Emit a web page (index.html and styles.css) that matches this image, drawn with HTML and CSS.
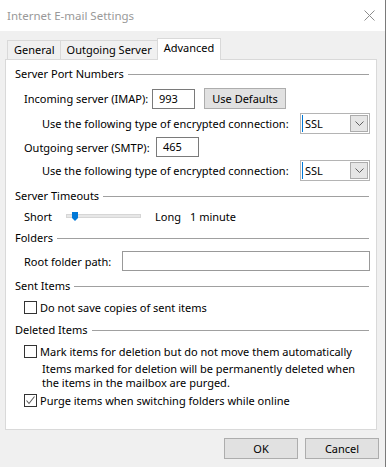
FILE: index.html
```html
<!DOCTYPE html>
<html>
    <head>
        <meta charset="utf-8">
        <title>Internet E-mail Settings</title>
        <link rel="stylesheet" href="styles.css">
    </head>
    <body>
        <div class="window">
            <div class="titlebar">
                <span class="title">Internet E-mail Settings</span>
                <svg class="close" width="11" height="11" viewBox="0 0 11 11"><path d="M0.5 0.5L10.5 10.5M10.5 0.5L0.5 10.5" stroke="#8c8c8c" stroke-width="1" fill="none"/></svg>
            </div>

            <div class="tabs">
                <span class="tab">General</span>
                <span class="tab">Outgoing Server</span>
                <span class="tab active">Advanced</span>
            </div>

            <div class="panel">
                <div class="group first">Server Port Numbers</div>
                <div class="row port">
                    <span class="label in-label">Incoming server (IMAP):</span>
                    <span class="field port-field">993</span>
                    <span class="btn defaults">Use Defaults</span>
                </div>
                <div class="row sub">
                    <span>Use the following type of encrypted connection:</span>
                    <span class="select"><span class="value">SSL</span><span class="arrow"><svg width="9" height="5" viewBox="0 0 9 5"><path d="M0.5 0.5L4.5 4.5L8.5 0.5" stroke="#606060" fill="none"/></svg></span></span>
                </div>
                <div class="row out">
                    <span class="label out-label">Outgoing server (SMTP):</span>
                    <span class="field port-field">465</span>
                </div>
                <div class="row sub last">
                    <span>Use the following type of encrypted connection:</span>
                    <span class="select"><span class="value">SSL</span><span class="arrow"><svg width="9" height="5" viewBox="0 0 9 5"><path d="M0.5 0.5L4.5 4.5L8.5 0.5" stroke="#606060" fill="none"/></svg></span></span>
                </div>

                <div class="group wide">Server Timeouts</div>
                <div class="row timeout">
                    <span class="short-label">Short</span>
                    <span class="slider">
                        <svg class="thumb" width="6" height="9" viewBox="0 0 6 9"><path d="M0 0H6V6L3 9L0 6Z" fill="#0078d7"/></svg>
                    </span>
                    <span class="long-label">Long</span>
                    <span>1 minute</span>
                </div>

                <div class="group">Folders</div>
                <div class="row root">
                    <span class="label root-label">Root folder path:</span>
                    <span class="field root-field"></span>
                </div>

                <div class="group">Sent Items</div>
                <div class="row check-row">
                    <span class="check"></span>
                    <span>Do not save copies of sent items</span>
                </div>

                <div class="group wide">Deleted Items</div>
                <div class="row check-row">
                    <span class="check"></span>
                    <span>Mark items for deletion but do not move them automatically</span>
                </div>
                <p class="note">Items marked for deletion will be permanently deleted when<br>the items in the mailbox are purged.</p>
                <div class="row check-row tight">
                    <span class="check"><svg width="11" height="11" viewBox="0 0 11 11"><path d="M1.5 5.5L4 8.5L9.5 1.5" stroke="#5c5c5c" stroke-width="1.1" fill="none"/></svg></span>
                    <span>Purge items when switching folders while online</span>
                </div>
            </div>

            <div class="actions">
                <span class="btn">OK</span>
                <span class="btn">Cancel</span>
            </div>
        </div>
    </body>
</html>
```

FILE: styles.css
```css
* {
    box-sizing: border-box;
}
body {
    margin: 0;
    font-family: "Noto Sans", "Open Sans", sans-serif;
    font-size: 11px;
    color: #000;
    background: #f0f0f0;
}
.window {
    width: 386px;
    height: 467px;
    border-right: 1px solid #7a7a7a;
    background: #f0f0f0;
}
.titlebar {
    height: 31px;
    background: #fff;
    display: flex;
    align-items: center;
    justify-content: space-between;
    padding: 0 10px 0 7px;
}
.title {
    color: #999;
    font-size: 11.5px;
}

/* tabs */
.tabs {
    display: flex;
    align-items: flex-end;
    margin: 7px 0 -1px 7px;
    position: relative;
    z-index: 1;
}
.tab {
    height: 20px;
    line-height: 18px;
    padding: 0 5px 0 6px;
    margin-right: -1px;
    border: 1px solid #d9d9d9;
    background: #f0f0f0;
}
.tab.active {
    height: 22px;
    padding: 0 6px;
    line-height: 18px;
    border-bottom: 0;
    background: #fff;
}
.panel {
    margin-left: 5px;
    width: 372px;
    height: 371px;
    border: 1px solid #d9d9d9;
    background: #fff;
    padding: 7px 6px 0 9px;
}

/* group headers */
.group {
    display: flex;
    align-items: center;
    height: 14px;
    line-height: 14px;
    margin-top: 8px;
}
.group.first {
    margin-top: 0;
}
.group.wide {
    margin-top: 9px;
}
.group::after {
    content: "";
    flex: 1;
    border-top: 1px solid #a0a0a0;
    margin: 1px 1px 0 4px;
}

/* rows */
.row {
    display: flex;
    align-items: center;
    padding-left: 9px;
    height: 20px;
    margin-top: 4px;
}
.row.port {
    height: 21px;
    margin-top: 7px;
}
.row.sub {
    padding-left: 27px;
}
.row.last {
    margin-top: 3px;
}
.row.timeout {
    height: 14px;
    margin-top: 6px;
}
.row.root {
    margin-top: 6px;
}
.row.check-row {
    height: 14px;
    margin-top: 7px;
}
.row.check-row.tight {
    margin-top: 3px;
}
.in-label {
    width: 128px;
}
.out-label {
    width: 132px;
}
.root-label {
    width: 98px;
}
.field {
    height: 20px;
    line-height: 18px;
    border: 1px solid #7a7a7a;
    background: #fff;
    padding: 0 6px;
}
.port-field {
    width: 43px;
}
.root-field {
    flex: 1;
    border-color: #999;
}
.btn {
    display: flex;
    align-items: center;
    justify-content: center;
    width: 74px;
    height: 21px;
    border: 1px solid #adadad;
    background: #e1e1e1;
}
.btn.defaults {
    width: 82px;
    margin-left: 9px;
}

/* combo box */
.select {
    display: flex;
    margin-left: auto;
    width: 70px;
    height: 21px;
    border: 1px solid #b4b4b4;
    padding: 1px;
    background: #fff;
}
.select .value {
    flex: 1;
    line-height: 17px;
    padding-left: 2px;
    border-left: 1px solid #0078d7;
}
.select .arrow {
    display: flex;
    align-items: center;
    justify-content: center;
    width: 18px;
    background: #e6e6e6;
    border: 1px solid #acacac;
}

/* slider */
.short-label {
    width: 42px;
}
.slider {
    position: relative;
    width: 75px;
    height: 4px;
    margin: 0 14px 0 0;
    background: #e7e7e7;
    border: 1px solid #d6d6d6;
}
.thumb {
    position: absolute;
    left: 5px;
    top: -3px;
}
.long-label {
    width: 35px;
}

/* checkboxes */
.check {
    display: flex;
    align-items: center;
    justify-content: center;
    width: 13px;
    height: 13px;
    border: 1px solid #333;
    background: #fff;
    margin-right: 3px;
}
.note {
    margin: 4px 0 0;
    padding-left: 27px;
    line-height: 14px;
}

.actions {
    display: flex;
    justify-content: flex-end;
    gap: 7px;
    margin-top: 8px;
    padding-right: 6px;
}
```
